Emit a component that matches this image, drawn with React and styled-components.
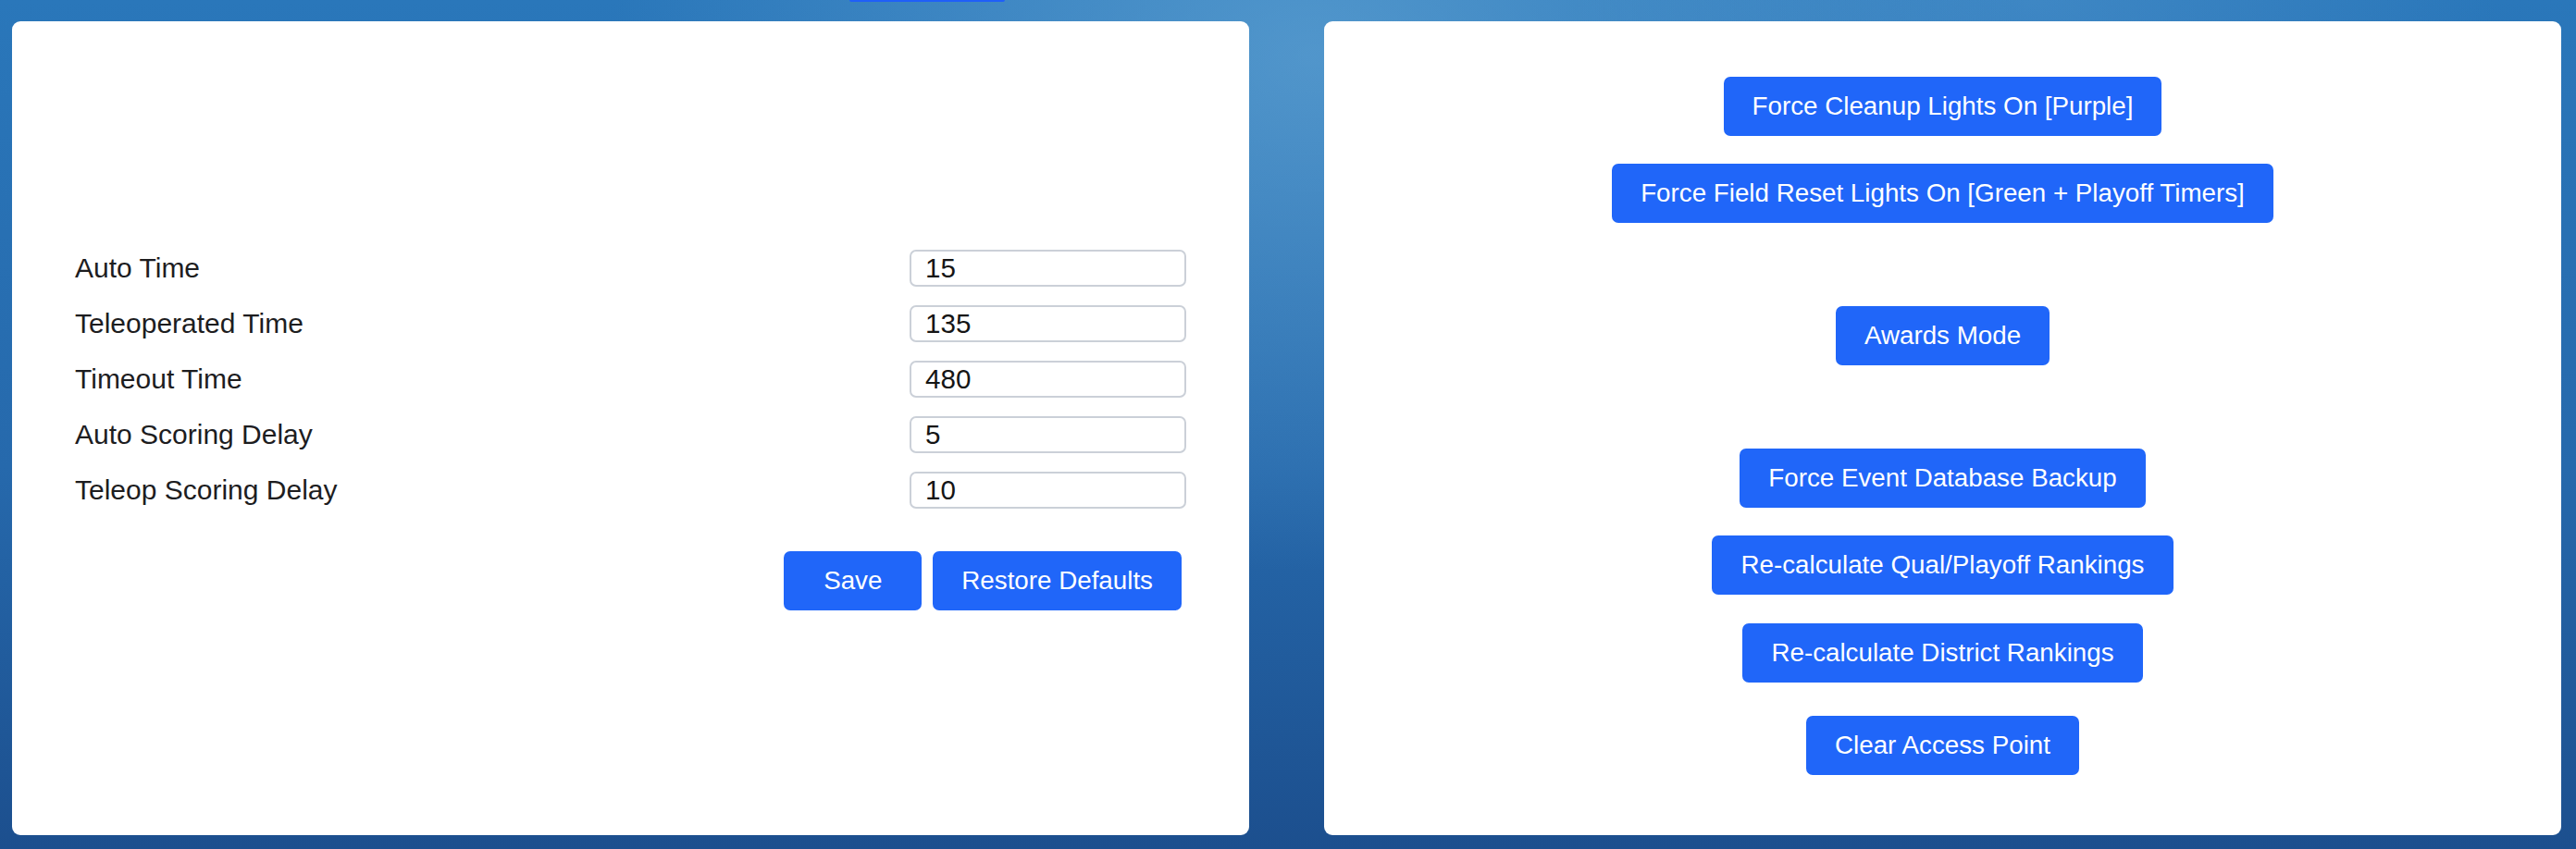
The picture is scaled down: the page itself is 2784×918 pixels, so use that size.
import React from 'react'
import styled, { createGlobalStyle } from 'styled-components'

const GlobalStyle = createGlobalStyle`
  html,
  body {
    margin: 0;
    padding: 0;
  }

  body {
    font-family: 'Liberation Sans', Arial, sans-serif;
    background:
      radial-gradient(ellipse 760px 560px at 1420px 60px, rgba(120, 182, 222, 0.5), rgba(120, 182, 222, 0) 100%),
      radial-gradient(ellipse 500px 300px at 2200px 0px, rgba(100, 165, 215, 0.35), rgba(100, 165, 215, 0) 100%),
      linear-gradient(180deg, #2a77ba 0%, #2669ac 55%, #1c4f8e 100%);
    min-height: 918px;
    overflow: hidden;
  }
`

const Page = styled.div`
  display: flex;
  flex-direction: column;
  height: 918px;
`

const TopStrip = styled.div`
  display: flex;
  height: 23px;
  padding-left: 918px;
`

const Tab = styled.div`
  width: 168px;
  height: 2px;
  background-color: #1f5ff8;
  border-radius: 0 0 3px 3px;
`

const Columns = styled.div`
  display: grid;
  grid-template-columns: 1337px 1337px;
  column-gap: 81px;
  padding-left: 13px;
`

const Card = styled.section`
  height: 880px;
  box-sizing: border-box;
  background-color: #ffffff;
  border-radius: 9px;
  display: flex;
  flex-direction: column;
`

const SettingsCard = styled(Card)`
  justify-content: center;
  padding: 4px 68px 0;
`

const ControlsCard = styled(Card)`
  align-items: center;
  padding-top: 60px;
`

const Fields = styled.div`
  display: flex;
  flex-direction: column;
  gap: 20px;
`

const Row = styled.div`
  display: flex;
  align-items: center;
  justify-content: space-between;
  height: 40px;
`

const Label = styled.label`
  font-size: 30px;
  color: #1d1d1f;
  line-height: 1;
`

const Input = styled.input`
  width: 299px;
  height: 40px;
  box-sizing: border-box;
  border: 2px solid #cbd0d8;
  border-radius: 7px;
  padding: 0 15px;
  font-family: 'Liberation Sans', Arial, sans-serif;
  font-size: 29.6px;
  color: #151515;
  background: #ffffff;
  outline: none;
`

const Actions = styled.div`
  display: flex;
  justify-content: flex-end;
  gap: 12px;
  margin-top: 46px;
  padding-right: 5px;
`

const Button = styled.button`
  height: 64px;
  box-sizing: border-box;
  padding: 0 31px;
  margin-top: ${(p) => p.$gap || 0}px;
  min-width: ${(p) => p.$minWidth || 0}px;
  border: none;
  border-radius: 7px;
  background-color: #2066f9;
  color: #ffffff;
  font-family: 'Liberation Sans', Arial, sans-serif;
  font-size: 27.75px;
  white-space: nowrap;
  cursor: pointer;
`

const fields = [
  { name: 'Auto Time', value: '15' },
  { name: 'Teleoperated Time', value: '135' },
  { name: 'Timeout Time', value: '480' },
  { name: 'Auto Scoring Delay', value: '5' },
  { name: 'Teleop Scoring Delay', value: '10' },
]

const controls = [
  { label: 'Force Cleanup Lights On [Purple]', gap: 0 },
  { label: 'Force Field Reset Lights On [Green + Playoff Timers]', gap: 30 },
  { label: 'Awards Mode', gap: 90 },
  { label: 'Force Event Database Backup', gap: 90 },
  { label: 'Re-calculate Qual/Playoff Rankings', gap: 30 },
  { label: 'Re-calculate District Rankings', gap: 31 },
  { label: 'Clear Access Point', gap: 36 },
]

const App = () => {
  return (
    <Page>
      <GlobalStyle />
      <TopStrip>
        <Tab />
      </TopStrip>

      <Columns>
        <SettingsCard>
          <Fields>
            {fields.map((f) => (
              <Row key={f.name}>
                <Label>{f.name}</Label>
                <Input type="text" defaultValue={f.value} />
              </Row>
            ))}
          </Fields>

          <Actions>
            <Button $minWidth={149}>Save</Button>
            <Button>Restore Defaults</Button>
          </Actions>
        </SettingsCard>

        <ControlsCard>
          {controls.map((c) => (
            <Button key={c.label} $gap={c.gap}>
              {c.label}
            </Button>
          ))}
        </ControlsCard>
      </Columns>
    </Page>
  )
}

export default App
